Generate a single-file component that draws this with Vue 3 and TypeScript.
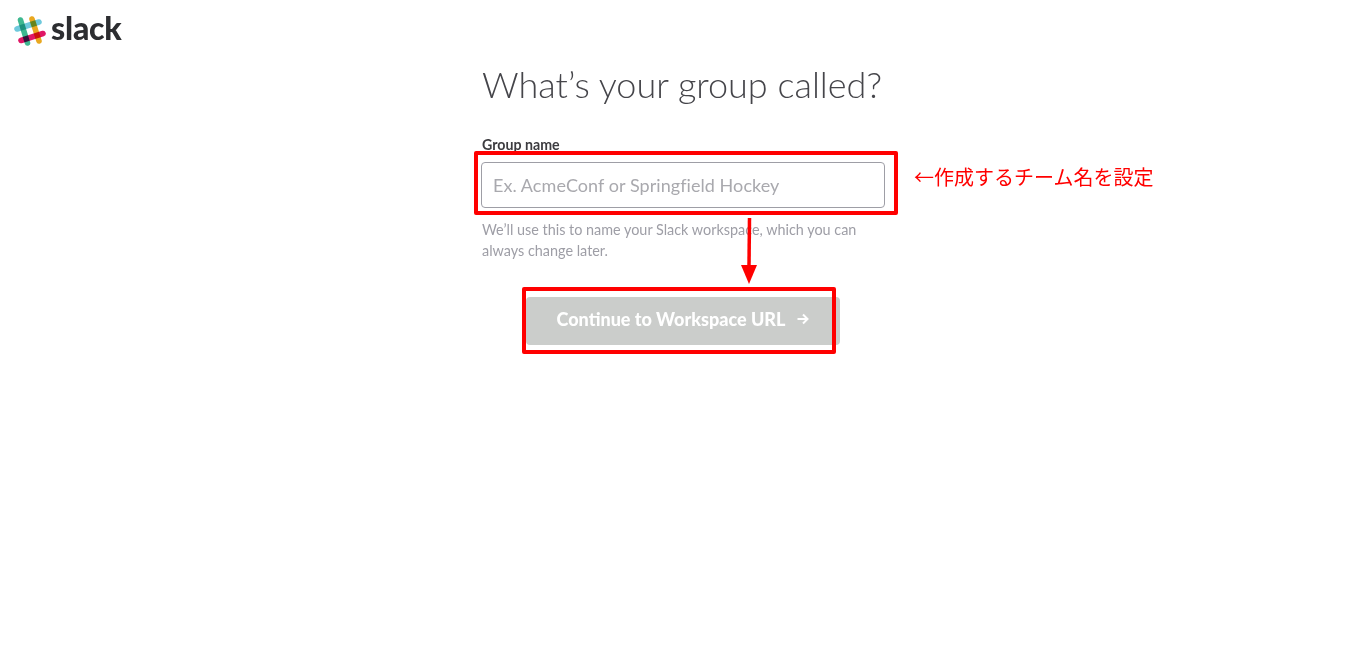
<script setup lang="ts">
import { ref } from 'vue'

const groupName = ref('')
</script>

<template>
  <div class="page">
    <header class="top">
      <svg class="mark" width="32" height="34" viewBox="0 0 32 34">
        <g class="bars" fill="none" stroke-width="5.6" stroke-linecap="round">
          <path d="M6.5 6 L13.5 29" stroke="#3eb890" />
          <path d="M18 5 L25 27" stroke="#e9a820" />
          <path d="M3 15 L25 8" stroke="#6fc9dc" />
          <path d="M7 26.5 L29 19.5" stroke="#e01765" />
        </g>
      </svg>
      <span class="word">slack</span>
    </header>

    <main class="column">
      <h1>What’s your group called?</h1>
      <label class="label" for="group">Group name</label>
      <input id="group" v-model="groupName" class="field" placeholder="Ex. AcmeConf or Springfield Hockey" />
      <p class="hint">We’ll use this to name your Slack workspace, which you can always change later.</p>
      <button class="go" type="button">
        Continue to Workspace URL
        <svg width="12" height="12" viewBox="0 0 12 12" fill="none" stroke="#fff" stroke-width="2">
          <path d="M0.5 6 H10.5 M6 1.5 L10.5 6 L6 10.5" />
        </svg>
      </button>
    </main>

    <!-- 赤枠の注釈 -->
    <div class="box box-input"></div>
    <div class="box box-button"></div>
    <div class="note">←作成するチーム名を設定</div>
    <svg class="down" width="20" height="68" viewBox="0 0 20 68">
      <path d="M10.5 0 L10 48" stroke="#f00" stroke-width="3.5" fill="none" />
      <path d="M2 47 H18 L10 66 Z" fill="#f00" />
    </svg>
  </div>
</template>

<style>
html, body {
  margin: 0;
  background: #fff;
}
</style>

<style scoped>
.page {
  position: relative;
  height: 652px;
  overflow: hidden;
  font-family: Lato, "Liberation Sans", sans-serif;
  color: #3d3c40;
}
.top {
  display: flex;
  align-items: center;
  gap: 5px;
  height: 34px;
  padding: 14px 0 0 14px;
}
.mark {
  flex: none;
}
.bars path {
  mix-blend-mode: multiply;
}
.word {
  font-size: 32px;
  font-weight: 900;
  letter-spacing: -0.2px;
  color: #2c2d30;
  line-height: 34px;
  margin-top: -7px;
}
.column {
  width: 404px;
  margin-left: 481px;
  display: flex;
  flex-direction: column;
}
h1 {
  margin: 14px 0 0;
  font-size: 36px;
  line-height: 44px;
  font-weight: 300;
  padding-left: 1px;
  color: #45454a;
  white-space: nowrap;
}
.label {
  margin-top: 30px;
  padding-left: 1px;
  font-size: 14.2px;
  line-height: 18px;
  font-weight: 700;
}
.field {
  box-sizing: border-box;
  width: 404px;
  height: 46px;
  margin-top: 8px;
  padding: 0 11px;
  border: 1px solid #9e9ea6;
  border-radius: 4px;
  font: 18px Lato, "Liberation Sans", sans-serif;
  letter-spacing: 0.06px;
  color: #3d3c40;
  outline: none;
}
.field::placeholder {
  color: #a9a9ae;
  opacity: 1;
}
.hint {
  margin: 11px 0 0;
  padding-left: 1px;
  width: 385px;
  font-size: 14.4px;
  line-height: 21px;
  color: #9e9ea6;
}
.go {
  align-self: flex-start;
  display: flex;
  align-items: center;
  justify-content: center;
  gap: 12px;
  box-sizing: border-box;
  width: 314px;
  height: 48px;
  margin: 36px 0 0 45px;
  padding: 0 6px 5px 6px;
  border: none;
  border-radius: 4px;
  background: #cbcdcb;
  color: #fff;
  font: 900 18px Lato, "Liberation Sans", sans-serif;
}
.go svg {
  margin-top: 1px;
}
.box {
  position: absolute;
  box-sizing: border-box;
  border: 4px solid #f00;
  border-radius: 2px;
}
.box-input {
  left: 474px;
  top: 151px;
  width: 424px;
  height: 64px;
}
.box-button {
  left: 522px;
  top: 287px;
  width: 314px;
  height: 67px;
}
.note {
  position: absolute;
  left: 914px;
  top: 165px;
  font-family: "Noto Sans CJK JP", sans-serif;
  font-size: 20px;
  line-height: 24px;
  color: #f00;
  white-space: nowrap;
}
.down {
  position: absolute;
  left: 739px;
  top: 218px;
}
</style>
